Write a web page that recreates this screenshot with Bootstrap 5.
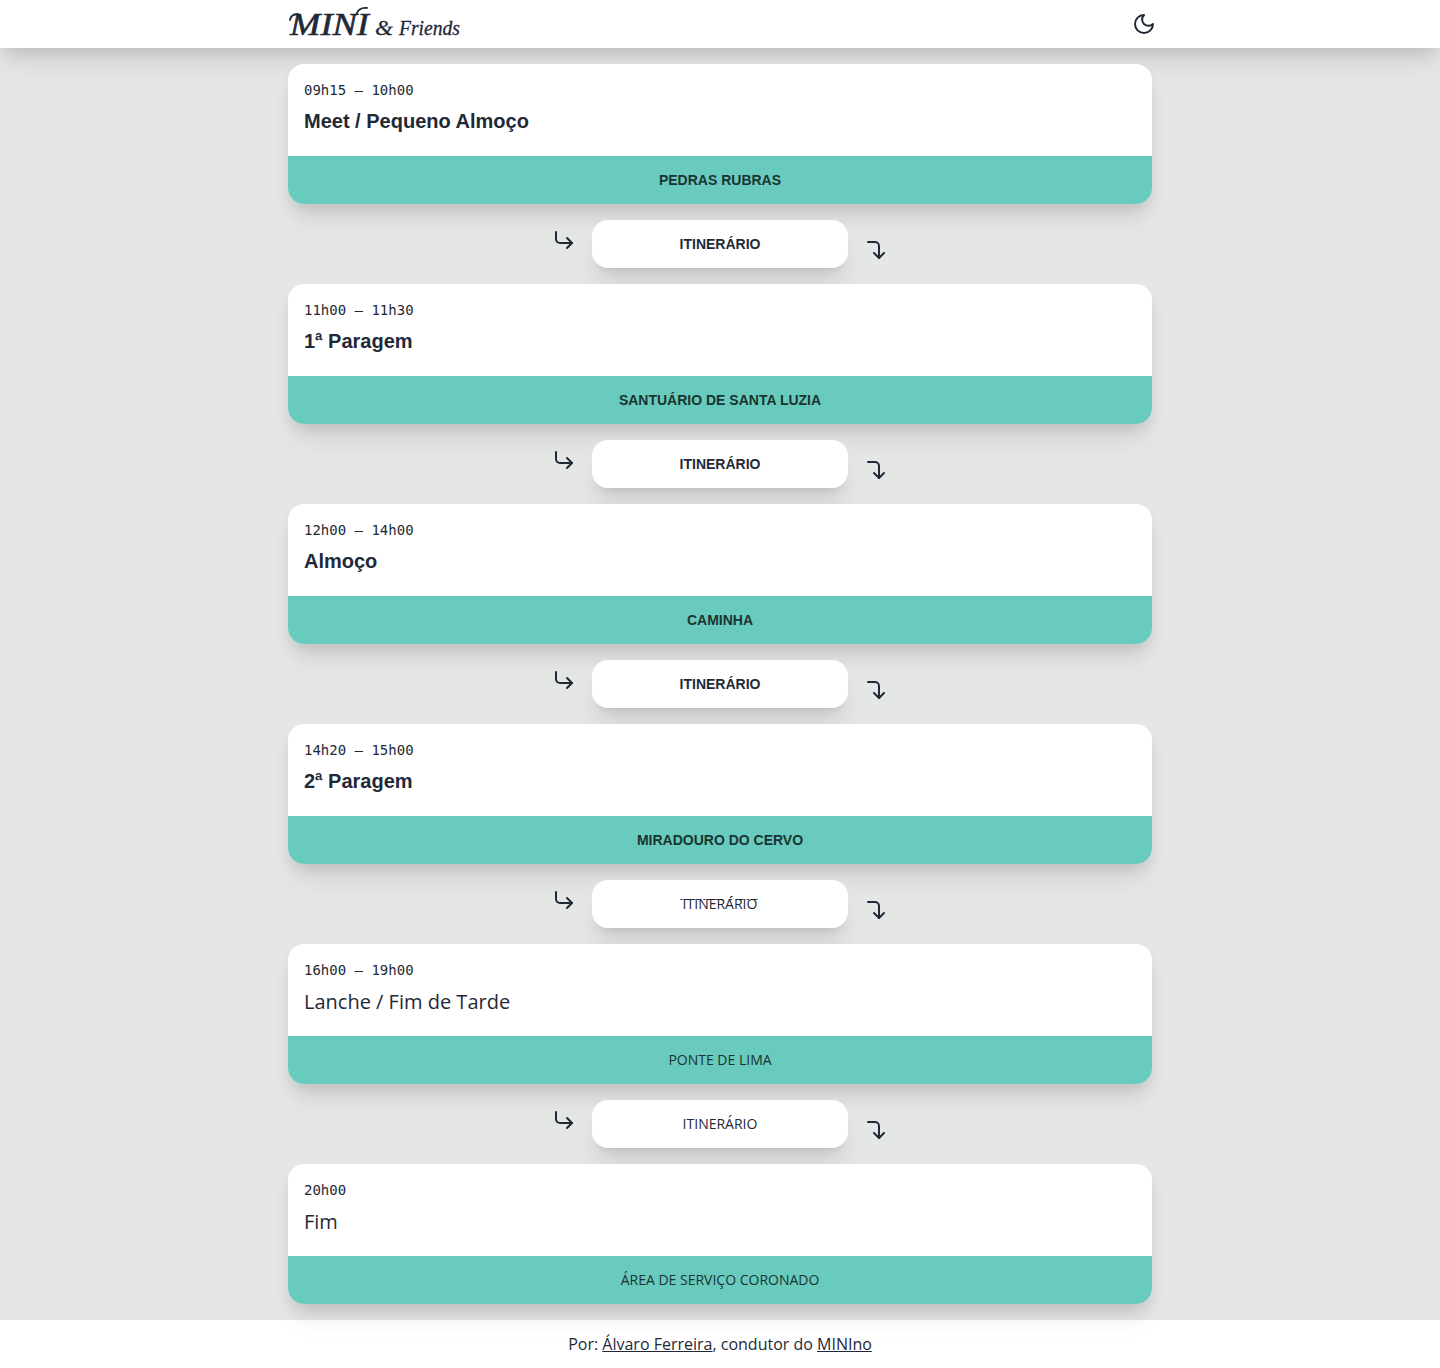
<!DOCTYPE html>
<html lang="pt" data-bs-theme="light">
<head>
<meta charset="utf-8">
<meta name="viewport" content="width=device-width, initial-scale=1">
<title>MINI &amp; Friends</title>
<link href="https://cdn.jsdelivr.net/npm/bootstrap@5.3.0/dist/css/bootstrap.min.css" rel="stylesheet">
<style>
body{background:#fff;color:#1f2937;font-family:"Open Sans",sans-serif}
.wrap{width:864px}
.topbar{height:48px;background:#fff;z-index:1}
.stage{background:#e5e7e6;height:1272px;padding-top:16px}
.itinerary{z-index:2;gap:16px}
.stop{height:140px;border-radius:16px;background:#fff}
.lift{box-shadow:0 20px 25px -5px rgba(0,0,0,.1),0 8px 10px -6px rgba(0,0,0,.1)}
.topbar,.stop.lift{box-shadow:0 20px 25px -5px rgba(0,0,0,.08),0 8px 16px -4px rgba(0,0,0,.12)}
.info{height:92px;padding:16px}
.hours{font:14px/20px "DejaVu Sans Mono",monospace}
.title{font:700 20px/28px "Liberation Sans",sans-serif;margin-top:7px}
.place{height:48px;background:#69cbbd;color:#1a3431;border-radius:0 0 16px 16px}
.label{font:700 14px/20px "Liberation Sans",sans-serif}
.plain .title{font:400 20px/28px "Open Sans",sans-serif;margin-top:8px}
.plain .label,.label.plain{font-family:"Open Sans",sans-serif;font-weight:400}
.leg{height:48px;gap:16px}
.route{width:256px;height:48px;border-radius:16px;background:#fff}
.swap span{clip-path:inset(5px 0 0 0)}
.swap::before{content:"ITINERÁRIO";position:absolute;font:700 14px/20px "Liberation Sans",sans-serif;clip-path:inset(0 0 14px 0)}
.arrow-out{margin-bottom:8px}
.arrow-in{margin-top:12px}
.foot{height:48px;font-size:16px;line-height:24px}
.foot a{color:inherit}
.brand text{font-family:"Liberation Serif",serif;font-style:italic;fill:#1f2937}
.brand path{fill:none;stroke:#1f2937;stroke-linecap:round;stroke-width:1.8}
.ic{fill:none;stroke:currentColor;stroke-width:2;stroke-linecap:round;stroke-linejoin:round}
.moon{margin-right:-4px}
</style>
</head>
<body>
<header class="topbar position-relative"><div class="wrap mx-auto h-100 d-flex justify-content-between align-items-center">
<svg class="brand" width="176" height="48" viewBox="0 0 176 48"><text x="2" y="34.5" font-size="32" textLength="79" lengthAdjust="spacingAndGlyphs" stroke="#1f2937" stroke-width=".6">MINI</text><path d="M2 20Q3 14 10 14M68.500 14Q71 7 79 8"/><text x="87" y="34.5" font-size="20" textLength="18" lengthAdjust="spacingAndGlyphs" stroke="#1f2937" stroke-width=".3">&amp;</text><text x="111" y="34.5" font-size="21" textLength="61" lengthAdjust="spacingAndGlyphs" stroke="#1f2937" stroke-width=".3">Friends</text></svg>
<svg class="ic moon" width="24" height="24" viewBox="0 0 24 24"><path d="M12 3a6 6 0 0 0 9 9 9 9 0 1 1-9-9Z"/></svg>
</div></header>
<main class="stage"><div class="itinerary wrap mx-auto d-flex flex-column position-relative" id="list"></div></main>
<footer class="foot d-flex justify-content-center align-items-center"><div>Por: <a href="#">Álvaro Ferreira</a>, condutor do <a href="#">MINIno</a></div></footer>
<script>
const stops=[["09h15 – 10h00","Meet / Pequeno Almoço","PEDRAS RUBRAS"],["11h00 – 11h30","1ª Paragem","SANTUÁRIO DE SANTA LUZIA"],["12h00 – 14h00","Almoço","CAMINHA"],["14h20 – 15h00","2ª Paragem","MIRADOURO DO CERVO"],["16h00 – 19h00","Lanche / Fim de Tarde","PONTE DE LIMA"],["20h00","Fim","ÁREA DE SERVIÇO CORONADO"]];
document.getElementById("list").innerHTML=stops.map((s,i)=>`<section class="stop lift ${i>3?"plain":""}"><div class="info"><div class="hours">${s[0]}</div><div class="title">${s[1]}</div></div><div class="place label d-flex align-items-center justify-content-center">${s[2]}</div></section>`+(i<5?`<div class="leg d-flex justify-content-center align-items-center"><svg class="ic arrow-out" width="24" height="24" viewBox="0 0 24 24"><path d="m15 10 5 5-5 5"/><path d="M4 4v7a4 4 0 0 0 4 4h12"/></svg><div class="route lift label ${i>2?"plain":""} ${i===3?"swap":""} d-flex align-items-center justify-content-center"><span>ITINERÁRIO</span></div><svg class="ic arrow-in" width="24" height="24" viewBox="0 0 24 24"><path d="m10 15 5 5 5-5"/><path d="M4 4h7a4 4 0 0 1 4 4v12"/></svg></div>`:"")).join("");
</script>
<script src="https://cdn.jsdelivr.net/npm/bootstrap@5.3.0/dist/js/bootstrap.bundle.min.js"></script>
</body>
</html>
